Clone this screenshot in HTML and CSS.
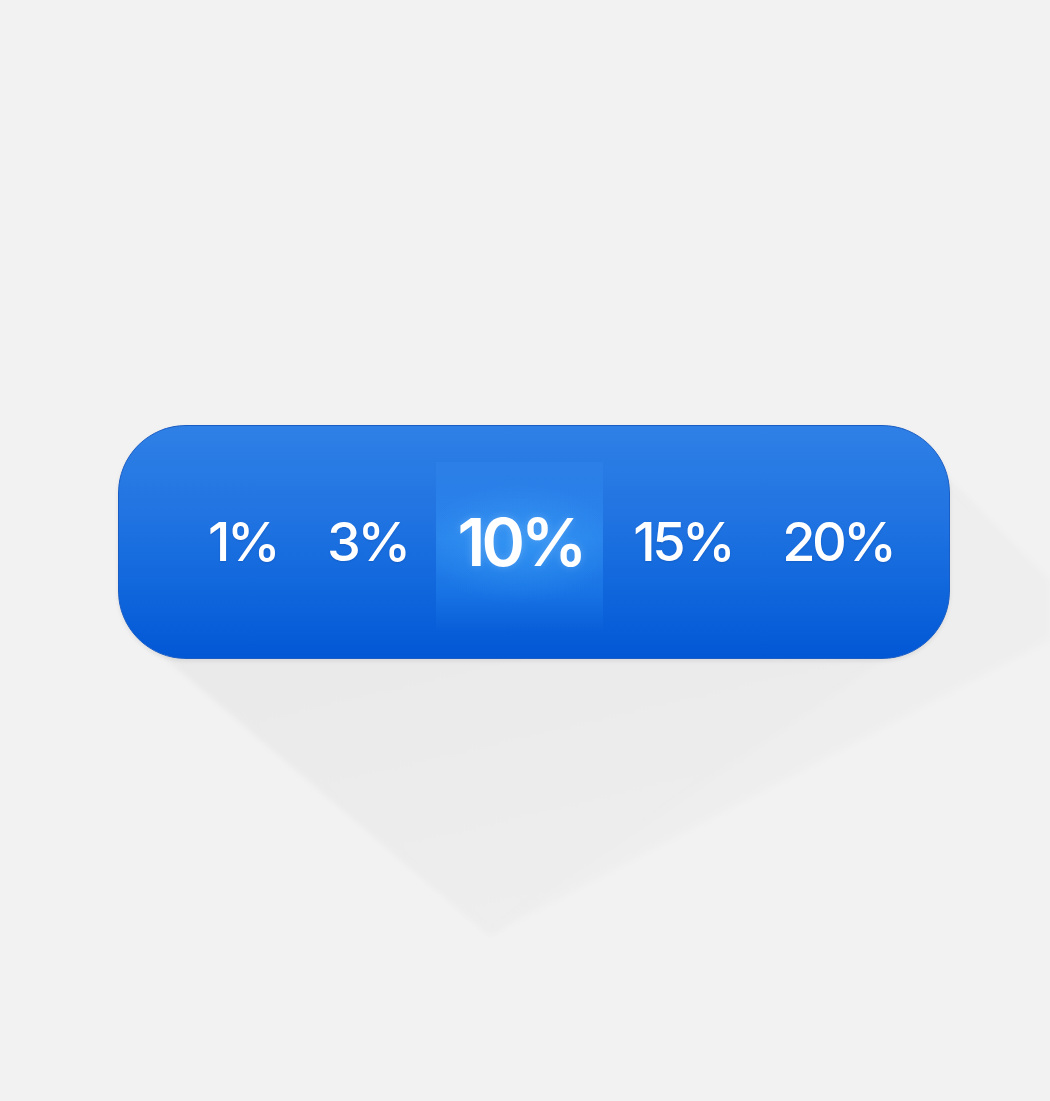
FILE: index.html
```html
<!DOCTYPE html>
<html lang="en">
<head>
    <meta charset="UTF-8">
    <meta name="viewport" content="width=device-width, initial-scale=1.0">
    <title>Tip picker</title>
    <link rel="stylesheet" href="styles.css">
</head>
<body>
    <div class="stage">
        <svg class="long-shadow" width="1050" height="1101" viewBox="0 0 1050 1101">
            <defs>
                <linearGradient id="shadeOuter" x1="0" y1="0" x2="1" y2="1">
                    <stop offset="0" stop-color="#ebebeb"/>
                    <stop offset="1" stop-color="#f0f0f0"/>
                </linearGradient>
                <linearGradient id="shadeInner" x1="0" y1="0" x2="0.6" y2="1">
                    <stop offset="0" stop-color="#e9e9e9"/>
                    <stop offset="1" stop-color="#eeeeee"/>
                </linearGradient>
                <filter id="soft"><feGaussianBlur stdDeviation="3"/></filter>
            </defs>
            <polygon points="150,640 940,470 1050,580 1050,640 490,935" fill="url(#shadeOuter)" filter="url(#soft)"/>
            <polygon points="150,645 890,655 490,935" fill="url(#shadeInner)" filter="url(#soft)"/>
        </svg>

        <div class="picker">
            <span class="opt">1%</span>
            <span class="opt">3%</span>
            <span class="opt active">10%</span>
            <span class="opt">15%</span>
            <span class="opt">20%</span>
        </div>
    </div>
</body>
</html>
```

FILE: styles.css
```css
body {
    margin: 0;
    background: #f2f2f2;
    font-family: 'Inter', 'Noto Sans', sans-serif;
}

.stage {
    position: relative;
    height: 1101px;
    padding: 425px 0 0 118px;
    box-sizing: border-box;
    overflow: hidden;
}

.long-shadow {
    position: absolute;
    top: 0;
    left: 0;
}

.picker {
    position: relative;
    isolation: isolate;
    display: flex;
    align-items: center;
    gap: 50px;
    width: 832px;
    height: 234px;
    padding-left: 89px;
    box-sizing: border-box;
    border-radius: 68px;
    border: 1.5px solid #1a5dc4;
    background: linear-gradient(to bottom, #2f80e6 0%, #2073e1 40%, #1067dc 70%, #0257d5 100%);
    box-shadow: 0 2px 4px rgba(0, 0, 0, 0.08);
}

.opt {
    position: relative;
    color: #fff;
    font-size: 54px;
    font-weight: 500;
    line-height: 1;
    letter-spacing: -3.5px;
    text-shadow: 0 1px 2px rgba(0, 20, 80, 0.15);
}

.opt.active {
    font-size: 66px;
    font-weight: 600;
    letter-spacing: -4px;
    text-shadow: 0 0 8px rgba(255, 255, 255, 0.2);
}

.opt.active::before {
    content: "";
    position: absolute;
    left: -22px;
    right: -20px;
    top: calc(50% - 80px);
    height: 170px;
    z-index: -1;
    background:
        radial-gradient(ellipse 60% 35% at 50% 48%, rgba(70, 175, 255, 0.4), rgba(70, 175, 255, 0) 100%),
        linear-gradient(to bottom, rgba(60, 150, 245, 0.15) 0%, rgba(55, 155, 250, 0.45) 45%, rgba(40, 140, 245, 0.3) 80%, rgba(30, 120, 235, 0) 100%);
}
```
